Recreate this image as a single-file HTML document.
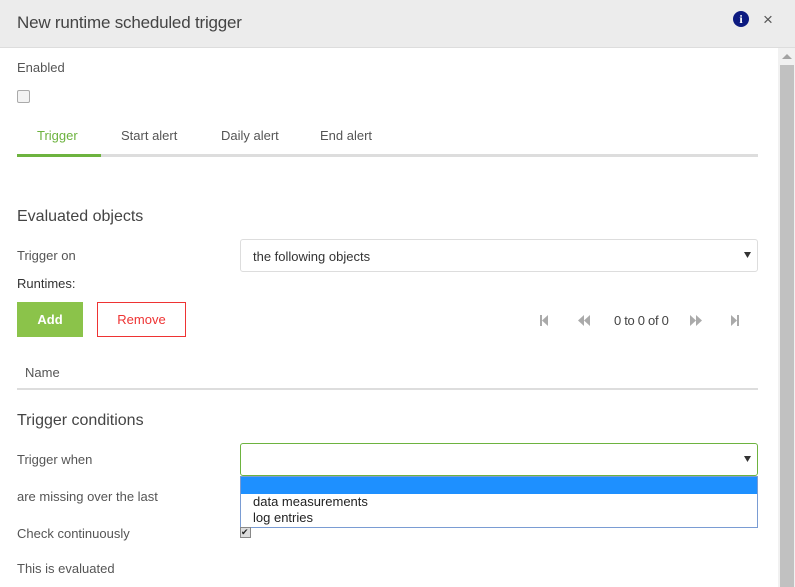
<!DOCTYPE html>
<html><head><style>
body{margin:0;width:795px;height:587px;overflow:hidden;background:#fff;font-family:"Liberation Sans",sans-serif;color:#555;position:relative;font-size:13px}
.a{position:absolute;white-space:nowrap}
</style></head><body>
<div class="a" style="left:0;top:0;width:795px;height:47px;background:#ececec;border-bottom:1px solid #ddd"></div>
<div class="a" style="left:17px;top:13px;font-size:17px;color:#444;letter-spacing:-0.2px">New runtime scheduled trigger</div>
<div class="a" style="left:733px;top:11px;width:16px;height:16px;border-radius:50%;background:#0c1a80;color:#fff;font-weight:bold;font-size:12px;text-align:center;line-height:16px;font-family:'Liberation Serif',serif">i</div>
<div class="a" style="left:763px;top:10px;font-size:17px;color:#555">×</div>
<div class="a" style="left:778px;top:48px;width:17px;height:539px;background:#f1f1f1"></div>
<div class="a" style="left:780px;top:65px;width:14px;height:522px;background:#c1c1c1"></div>
<div class="a" style="left:782px;top:54px;width:0;height:0;border-left:5px solid transparent;border-right:5px solid transparent;border-bottom:5px solid #a3a3a3"></div>

<div class="a" style="left:17px;top:60px">Enabled</div>
<div class="a" style="left:17px;top:90px;width:11px;height:11px;border:1px solid #aaa;border-radius:2px;background:#f3f3f3"></div>
<div class="a" style="left:17px;top:154px;width:741px;height:3px;background:#ddd"></div>
<div class="a" style="left:17px;top:154px;width:84px;height:3px;background:#6db33f"></div>
<div class="a" style="left:37px;top:128px;color:#6db33f">Trigger</div>
<div class="a" style="left:121px;top:128px">Start alert</div>
<div class="a" style="left:221px;top:128px">Daily alert</div>
<div class="a" style="left:320px;top:128px">End alert</div>

<div class="a" style="left:17px;top:208px;font-size:16px;color:#444">Evaluated objects</div>
<div class="a" style="left:17px;top:248px">Trigger on</div>
<div class="a" style="left:240px;top:239px;width:516px;height:31px;border:1px solid #ddd;border-radius:3px"></div>
<div class="a" style="left:253px;top:249px;color:#333">the following objects</div>
<svg class="a" style="left:744px;top:252px" width="7" height="6"><path d="M0 0H7L3.5 6Z" fill="#333"/></svg>
<div class="a" style="left:17px;top:276px;color:#333">Runtimes:</div>
<div class="a" style="left:17px;top:302px;width:66px;height:35px;background:#8bc34a;color:#fff;font-weight:bold;text-align:center;line-height:35px">Add</div>
<div class="a" style="left:97px;top:302px;width:87px;height:33px;border:1px solid #e33;color:#e33;text-align:center;line-height:33px">Remove</div>
<svg class="a" style="left:538px;top:314px" width="210" height="14" fill="#aaa">
<rect x="2" y="1" width="2" height="11"/><path d="M10 1L4 6.5L10 12Z"/>
<path d="M46 1L40 6.5L46 12Z M52 1L46 6.5L52 12Z"/>
<path d="M33 0" />
<path d="M152 1L158 6.5L152 12Z M158 1L164 6.5L158 12Z"/>
<path d="M193 1L199 6.5L193 12Z"/><rect x="199" y="1" width="2" height="11"/>
</svg>
<div class="a" style="left:614px;top:313px;color:#444;letter-spacing:-0.3px">0 to 0 of 0</div>
<div class="a" style="left:25px;top:365px">Name</div>
<div class="a" style="left:17px;top:388px;width:741px;height:2px;background:#ddd"></div>

<div class="a" style="left:17px;top:412px;font-size:16px;color:#444">Trigger conditions</div>
<div class="a" style="left:17px;top:452px">Trigger when</div>
<div class="a" style="left:240px;top:443px;width:516px;height:31px;border:1px solid #6db33f;border-radius:3px"></div>
<svg class="a" style="left:744px;top:456px" width="7" height="6"><path d="M0 0H7L3.5 6Z" fill="#333"/></svg>
<div class="a" style="left:240px;top:476px;width:516px;height:50px;border:1px solid #7a9cd3;background:#fff"></div>
<div class="a" style="left:241px;top:477px;width:516px;height:17px;background:#1e90ff"></div>
<div class="a" style="left:253px;top:494px;color:#222">data measurements</div>
<div class="a" style="left:253px;top:510px;color:#222">log entries</div>
<div class="a" style="left:17px;top:489px">are missing over the last</div>
<div class="a" style="left:17px;top:526px">Check continuously</div>
<div class="a" style="left:240px;top:527px;width:9px;height:9px;border:1px solid #888;background:#ddd;font-size:9px;line-height:9px;color:#222">✔</div>
<div class="a" style="left:17px;top:561px">This is evaluated</div>
</body></html>
